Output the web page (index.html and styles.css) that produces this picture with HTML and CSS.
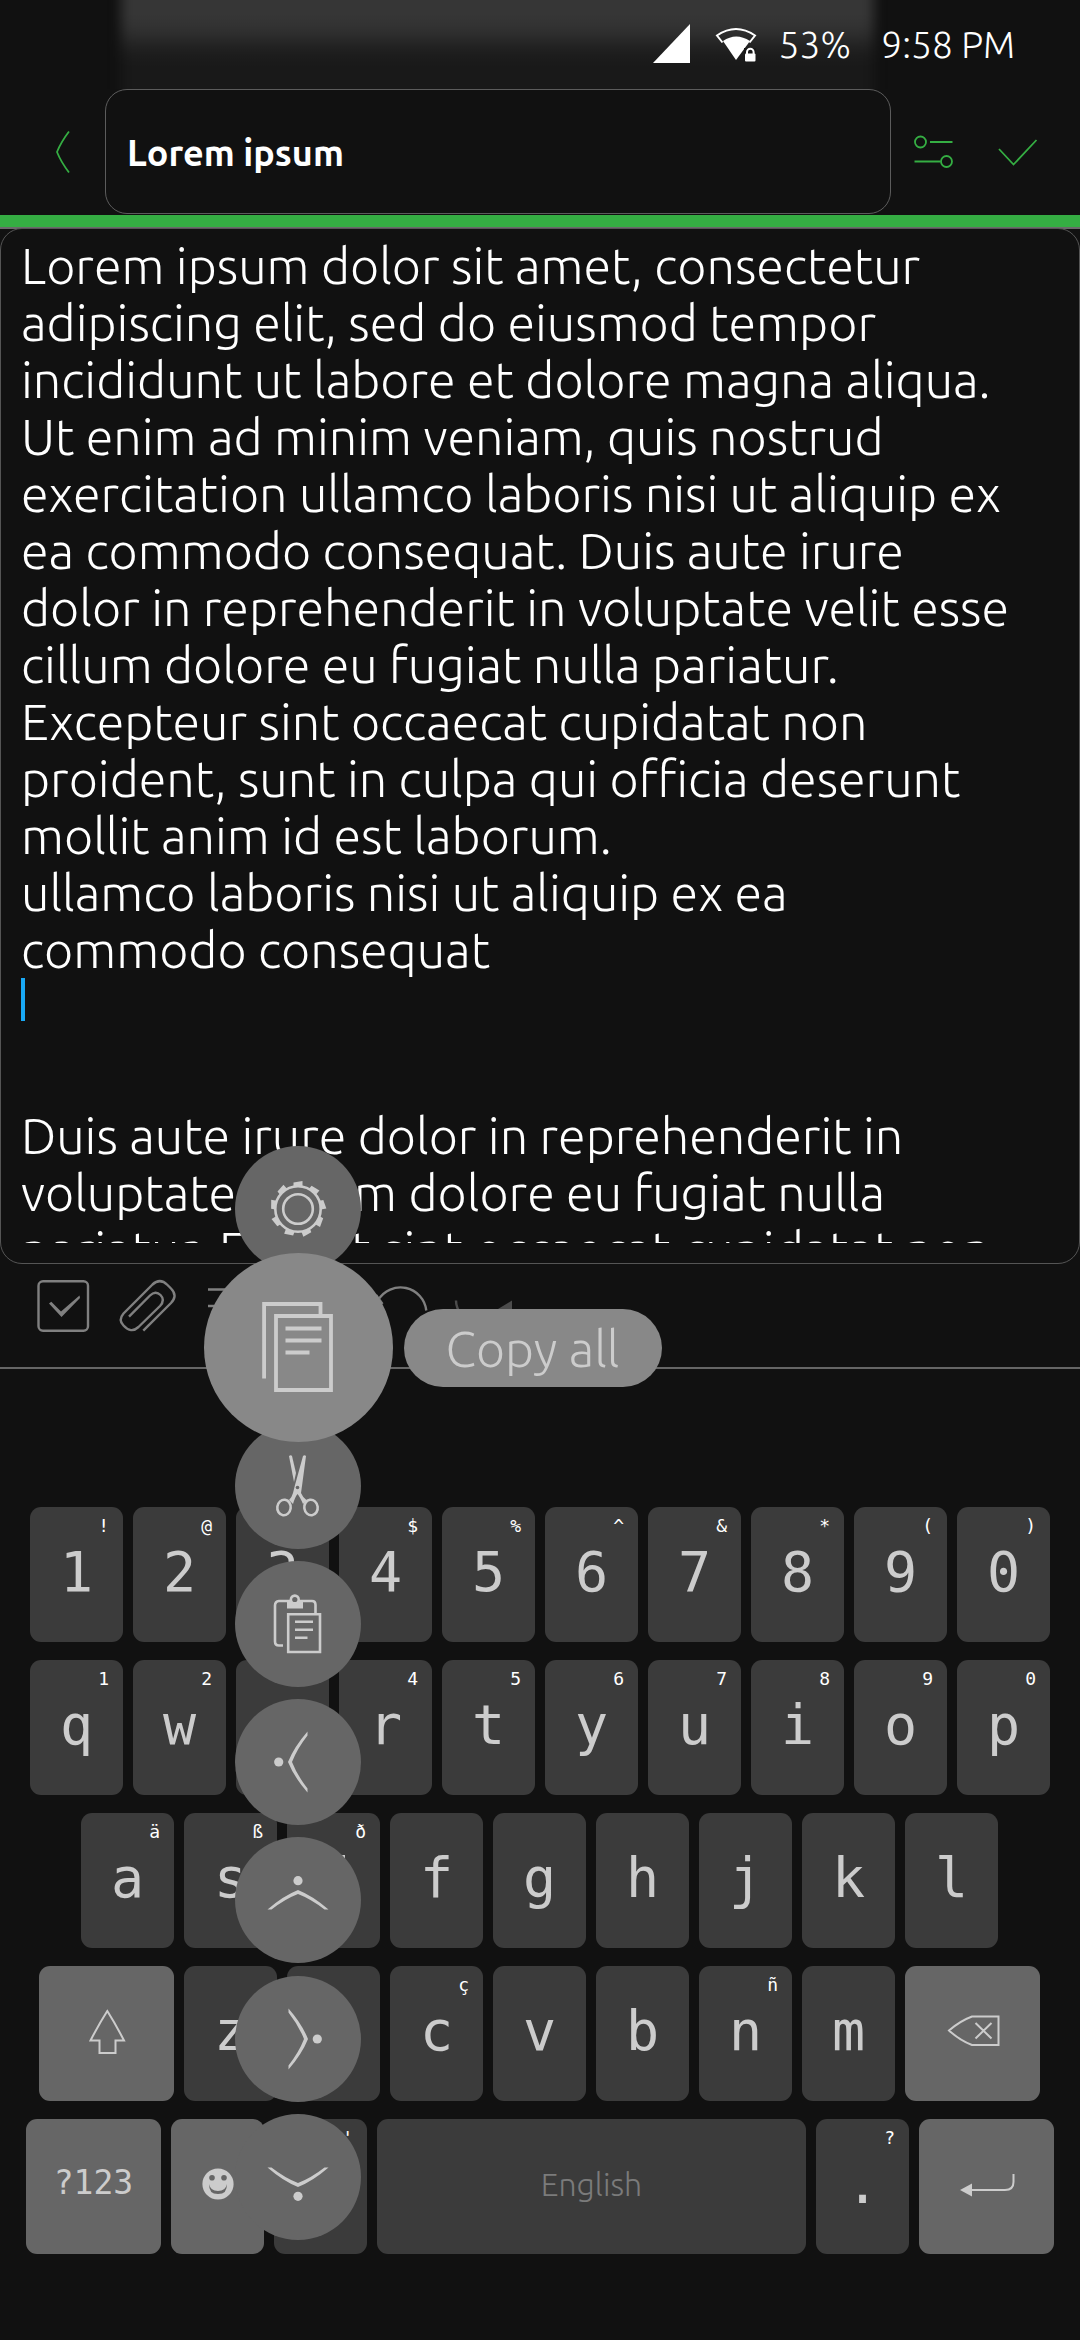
FILE: index.html
```html
<!DOCTYPE html>
<html lang="en">
<head>
<meta charset="utf-8">
<title>Lorem ipsum</title>
<link rel="stylesheet" href="styles.css">
</head>
<body>
<main class="screen">
  <div class="status">
    <div class="status-glow"></div>
    <svg class="signal" viewBox="0 0 38 40"><path d="M0 39 37 0V39z"/></svg>
    <svg class="wifi" viewBox="0 0 42 36">
      <path d="M8 13Q21 4 35 13L21 32z"/>
      <path class="wifi-rim" d="M7.5 14.500 2 7.500Q21-5.500 40 7.500L34.500 14.500"/>
      <path class="wifi-gap" d="M29 20h12v15h-12z"/>
      <path d="M30 26.500q0-1 1-1h8.500q1 0 1 1v6q0 1-1 1H31q-1 0-1-1z"/>
      <path class="lock-ring" d="M32 26v-2a3.300 3.300 0 0 1 6.600 0v2"/>
    </svg>
    <span class="battery">53%</span>
    <span class="clock">9:58 PM</span>
  </div>

  <header class="header">
    <div class="back"><svg width="16" height="42" viewBox="0 0 16 42"><path d="M14 .500Q6 11 2 21 6 31 14 41.500"/></svg></div>
    <div class="title">Lorem ipsum</div>
    <div class="actions">
      <svg width="40" height="34" viewBox="0 0 40 34"><circle cx="6.500" cy="7" r="5.500"/><path d="M16 7h22.500M.500 26.500h26"/><circle cx="32.500" cy="26.500" r="5.500"/></svg>
      <svg width="40" height="27" viewBox="0 0 40 27"><path d="m1 10 14.500 15.500L38.500 1"/></svg>
    </div>
  </header>
  <div class="accent"></div>

  <section class="editor">
    <div class="text">
      <p>Lorem ipsum dolor sit amet, consectetur<br>adipiscing elit, sed do eiusmod tempor<br>incididunt ut labore et dolore magna aliqua.<br>Ut enim ad minim veniam, quis nostrud<br>exercitation ullamco laboris nisi ut aliquip ex<br>ea commodo consequat. Duis aute irure<br>dolor in reprehenderit in voluptate velit esse<br>cillum dolore eu fugiat nulla pariatur.<br>Excepteur sint occaecat cupidatat non<br>proident, sunt in culpa qui officia deserunt<br>mollit anim id est laborum.<br>ullamco laboris nisi ut aliquip ex ea<br>commodo consequat</p>
      <div class="caret"></div>
      <p>Duis aute irure dolor in reprehenderit in<br>voluptate <span class="shifted">cillum</span> dolore eu fugiat nulla<br>pariatur. Except sint occaecat cupidatat non</p>
    </div>
  </section>

  <div class="toolbar">
    <svg viewBox="0 0 56 56"><rect x="3.500" y="3.200" width="49.500" height="49.500" rx="4.500"/><path class="solid" d="M14 25.500l2.300-1.700L26 33.500 44.500 17.500 45 20 26.500 39z"/></svg>
    <svg viewBox="0 0 56 56"><path d="M24.300 52.700 52 25Q59 17.500 52 10.500L48.500 7Q41-.500 33.500 6.500L4.500 35.500Q-1 42 4.500 47.500 12 56 19.500 49L41 28Q46.500 22 41.500 17 36.500 12 31 17.500L10 38.700"/></svg>
    <svg viewBox="0 0 56 56"><path d="M5 11.500h46M5 28h46M5 44.500h46"/></svg>
    <svg class="undo" viewBox="0 0 56 56"><path d="M7.200 22A26 26 0 0 1 55.300 32.500M5 17l6.500 9"/></svg>
    <svg class="dim" viewBox="0 0 56 56"><path d="M1 22.500q0 7 5 14"/><path class="solid" d="M57 22.500v18L28 40z"/></svg>
  </div>

  <section class="keyboard">
    <div class="row">
      <div class="key">1<i>!</i></div><div class="key">2<i>@</i></div><div class="key">3<i>#</i></div><div class="key">4<i>$</i></div><div class="key">5<i>%</i></div><div class="key">6<i>^</i></div><div class="key">7<i>&amp;</i></div><div class="key">8<i>*</i></div><div class="key">9<i>(</i></div><div class="key">0<i>)</i></div>
    </div>
    <div class="row">
      <div class="key">q<i>1</i></div><div class="key">w<i>2</i></div><div class="key">e<i>3</i></div><div class="key">r<i>4</i></div><div class="key">t<i>5</i></div><div class="key">y<i>6</i></div><div class="key">u<i>7</i></div><div class="key">i<i>8</i></div><div class="key">o<i>9</i></div><div class="key">p<i>0</i></div>
    </div>
    <div class="row odd">
      <div class="key">a<i>ä</i></div><div class="key">s<i>ß</i></div><div class="key">d<i>ð</i></div><div class="key">f</div><div class="key">g</div><div class="key">h</div><div class="key">j</div><div class="key">k</div><div class="key">l</div>
    </div>
    <div class="row odd">
      <div class="key wide icon"><svg width="40" height="46" viewBox="0 0 40 46"><path d="M20.300 3Q12 16 3.500 32.500H12.500V45H28.500V32.500H37Q28.500 16 20.300 3z"/></svg></div>
      <div class="key">z</div><div class="key">x</div><div class="key">c<i>ç</i></div><div class="key">v</div><div class="key">b</div><div class="key">n<i>ñ</i></div><div class="key">m</div>
      <div class="key wide icon"><svg width="54" height="32" viewBox="0 0 54 32"><path d="M3 15.500Q14 6 26 1.500H52.500V30H26Q14 25.500 3 15.500zM29.500 8 45.500 23.500M45.500 8 29.500 23.500"/></svg></div>
    </div>
    <div class="row">
      <div class="key wide mode">?123</div>
      <div class="key light icon"><svg width="32" height="32" viewBox="0 0 32 32"><circle class="solid" cx="16" cy="16" r="15.600"/><circle class="hole" cx="10" cy="9.800" r="2.800"/><circle class="hole" cx="22" cy="9.800" r="2.800"/><path class="hole" d="M7.200 16q1 7 8.800 7t8.800-7q.700 10-8.800 10T7.200 16z"/></svg></div>
      <div class="key">,<i>'</i></div>
      <div class="key space">English</div>
      <div class="key">.<i>?</i></div>
      <div class="key wide icon"><svg class="enter" width="56" height="28" viewBox="0 0 56 28"><path d="M12 18H46Q54.500 18 54.500 10V2"/><path class="solid" d="M1 18 13 11.500v13z"/></svg></div>
    </div>
  </section>

  <nav class="wheel">
    <div class="bubble"><svg viewBox="-63 -63 126 126">
      <circle r="22.700"/><circle r="14.800"/>
      <g class="solid"><path id="tooth" d="M-4.500-22.500V-26.500L4.500-28V-22.500z"/><use href="#tooth" transform="rotate(40)"/><use href="#tooth" transform="rotate(80)"/><use href="#tooth" transform="rotate(120)"/><use href="#tooth" transform="rotate(160)"/><use href="#tooth" transform="rotate(200)"/><use href="#tooth" transform="rotate(240)"/><use href="#tooth" transform="rotate(280)"/><use href="#tooth" transform="rotate(320)"/></g>
    </svg></div>
    <div class="bubble active">
      <svg viewBox="-94.500 -94.500 189 189"><path class="bold" d="M-34.400 31V-43.500H22V-33M-22.500-31.500H32.500V42.500H-22.500zM-13-19H23M-13-7H23M-13 5H11"/></svg>
      <div class="tip">Copy all</div>
    </div>
    <div class="bubble"><svg viewBox="-63 -63 126 126">
      <ellipse cx="-14" cy="21.500" rx="6.700" ry="7.800" transform="rotate(8 -14 21.500)"/><ellipse cx="13" cy="21.500" rx="6.700" ry="7.800" transform="rotate(-8 13 21.500)"/>
      <path class="solid" d="M-9-30q2-1.500 3 0l4 17-2 9z"/>
      <path class="solid" d="M5-30q1.500-1.500 3 0L4 0 3 7q2 5 6 7.500L5 18Q2 11-.500 8-3 11-5 18l-4-4q3-3 4-7L-3-1z"/><circle class="hole" cx="-.500" cy="1.500" r="1.800"/>
    </svg></div>
    <div class="bubble"><svg viewBox="-63 -63 126 126">
      <path d="M-15 21.500h-4q-4 0-4-4v-36q0-4 4-4.500h33q3.500 0 3.500 4v8M-9.800-9.800H22V28H-9.800zM-3-2.200H15M-3 5.800H15M-3 13.800H9.500"/>
      <path class="solid" d="M-11-24H5v8.500H-11z"/><circle class="solid" cx="-3.200" cy="-24.500" r="5.200"/><circle class="hole" cx="-3.200" cy="-24.500" r="2.600"/>
    </svg></div>
    <div class="bubble"><svg viewBox="-63 -63 126 126"><g id="move" class="solid"><circle cx="-19.300" r="4.600"/><path d="M9.500-30.500V-26.500Q-1-13-6 0-1 13 9.500 26.500V30.500Q-4 15-10 0-4-15 9.500-30.500z"/></g></svg></div>
    <div class="bubble"><svg viewBox="-63 -63 126 126"><use href="#move" transform="rotate(90)"/></svg></div>
    <div class="bubble"><svg viewBox="-63 -63 126 126"><use href="#move" transform="scale(-1 1)"/></svg></div>
    <div class="bubble"><svg viewBox="-63 -63 126 126"><use href="#move" transform="rotate(-90)"/></svg></div>
  </nav>
</main>
</body>
</html>
```

FILE: styles.css
```css
* { box-sizing: border-box; }
body { margin: 0; background: #111; color: #fff; font-family: Ubuntu, "Open Sans", sans-serif; font-weight: 300; }
svg { display: block; overflow: visible; fill: none; }
.screen { position: relative; width: 1080px; height: 2340px; overflow: hidden; display: flex; flex-direction: column; }

.status { position: relative; height: 89px; flex: none; overflow: hidden; display: flex; align-items: flex-start; justify-content: flex-end; padding-right: 65px; font-size: 37px; line-height: 42px; }
.status > * { position: relative; }
.status .status-glow { position: absolute; left: 121px; top: -40px; width: 753px; height: 170px; background: linear-gradient(#363636 58px, #2e2e2e 74px, #202020 88px, #191919 102px); filter: blur(6px); }
.status svg { fill: #fff; flex: none; }
.signal { width: 38px; height: 40px; margin: 24px 24px 0 0; }
.wifi { width: 42px; height: 36px; margin: 28px 22px 0 0; }
.wifi .wifi-rim { fill: none; stroke: #fff; stroke-width: 2; }
.wifi .wifi-gap { fill: #191919; }
.wifi .lock-ring { fill: none; stroke: #fff; stroke-width: 2; }
.battery, .clock { margin-top: 24px; white-space: nowrap; }
.clock { margin-left: 30px; }

.header { height: 126px; flex: none; display: flex; background: #111; position: relative; }
.header svg { stroke: #35ae43; stroke-width: 1.8; }
.back { width: 105px; display: flex; align-items: center; padding-left: 55px; }
.title { width: 786px; height: 125px; border: 1px solid #5c5c5c; border-radius: 22px; padding: 2px 0 0 21px; display: flex; align-items: center; font-size: 36px; font-weight: 700; }
.actions { display: flex; align-items: center; gap: 44px; padding-left: 23px; }
.accent { height: 13.500px; flex: none; background: #35ae43; border-bottom: 2.500px solid #6a6a6a; }

.editor { height: 1036px; flex: none; border: 1px solid #555; border-radius: 22px; padding: 8px 0 0 20px; margin-top: -1px; }
.text { height: 1006px; overflow: hidden; font-size: 50.25px; line-height: 57px; white-space: nowrap; }
.text p { margin: 0; }
.shifted { margin-left: 18px; }
.caret { width: 4px; height: 43px; margin: 0 0 86px; background: #19a9f5; }

.toolbar { height: 105px; flex: none; display: flex; gap: 28px; padding: 14px 35px 0; border-bottom: 2px solid #666; }
.toolbar svg { width: 56px; height: 56px; stroke: #808080; stroke-width: 2.4; }
.toolbar .undo { margin-left: 84px; }
.toolbar .solid { fill: #808080; stroke: none; }
.toolbar .dim { stroke: #4c4c4c; }
.toolbar .dim .solid { fill: #4c4c4c; }

.keyboard { padding-top: 138px; display: flex; flex-direction: column; gap: 18px; font-family: "DejaVu Sans Mono", monospace; font-weight: 400; color: #ccc; }
.row { display: flex; justify-content: center; gap: 10px; }
.odd { padding-right: 1px; }
.key { position: relative; width: 93px; height: 135px; padding-top: 33px; border-radius: 11px; background: #3b3b3b; text-align: center; font-size: 55px; line-height: 64px; }
.key i { position: absolute; top: 8px; right: 14px; font-style: normal; font-size: 18px; line-height: 21px; color: #fff; }
.wide { width: 135px; }
.wide, .light { background: #666; }
.icon { padding: 0; display: flex; align-items: center; justify-content: center; }
.key svg { stroke: #ccc; stroke-width: 2; margin-top: -5px; }
.key svg .solid { fill: #ccc; stroke: none; }
.key svg .hole { fill: #666; stroke: none; }
.key .enter { margin-top: 0; }
.mode { font-size: 33px; padding-top: 32px; }
.space { width: 429px; padding-top: 33px; font-family: Ubuntu, "Open Sans", sans-serif; font-weight: 300; font-size: 32px; color: #7b7b7b; }

.wheel { position: absolute; left: 203px; top: 1146px; width: 190px; display: flex; flex-direction: column; align-items: center; gap: 12.300px; }
.bubble { position: relative; width: 126px; height: 126px; flex: none; border-radius: 50%; background: #666; }
.bubble svg { width: 100%; height: 100%; stroke: #ccc; stroke-width: 2.6; }
.bubble .bold { stroke-width: 3.800; }
.bubble .solid { fill: #ccc; stroke: none; }
.bubble .hole { fill: #666; stroke: none; }
.active { z-index: 1; width: 189px; height: 189px; margin: -31.500px 0; background: #888; }
.tip { position: absolute; left: 200px; top: 56px; width: 258px; height: 78px; border-radius: 39px; background: #888; color: #ccc; font-size: 50px; line-height: 78px; text-align: center; }
```
